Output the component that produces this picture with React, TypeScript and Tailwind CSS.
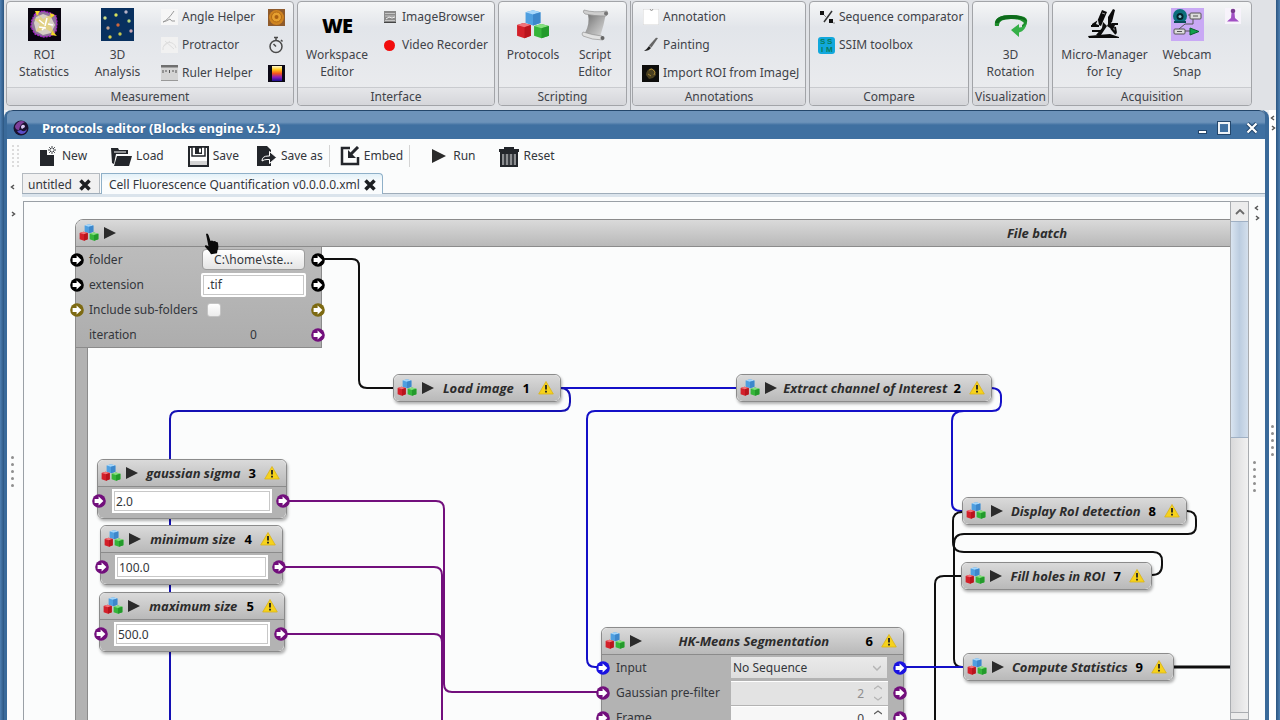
import { useId } from 'react'
import type { ReactNode } from 'react'
import clsx from 'clsx'

type Tone = 'black' | 'blue' | 'olive' | 'purple'

const PORT_COLORS: Record<Tone, string> = {
  black: '#000000',
  blue: '#1a12e0',
  olive: '#7d6a12',
  purple: '#720f7c',
}

// Wires between blocks, in canvas coordinates
const WIRES = [
  { color: '#0f0f0f', width: 2, d: 'M300 57H328q7 0 7 7V178q0 8 8 8H370' },
  { color: '#1410c8', width: 2, d: 'M536 186H713' },
  { color: '#1410b4', width: 2, d: 'M536 186q10 0 10 10v4q0 9-9 9H154q-8 0-8 8V520' },
  { color: '#1410c8', width: 2, d: 'M967 186q10 0 10 9v5q0 9-9 9H571q-8 0-8 8V457q0 8 8 8h9' },
  { color: '#1410c8', width: 2, d: 'M940 209q-12 0-12 10V301q0 8 9 8h3' },
  { color: '#720f7c', width: 2, d: 'M262 299H412q8 0 8 8V482q0 8 8 8H578' },
  { color: '#720f7c', width: 2, d: 'M258 365H410q8 0 8 8V520' },
  { color: '#720f7c', width: 2, d: 'M260 432H410q8 0 8 8V520' },
  { color: '#0f0f0f', width: 2, d: 'M1163 309q9 0 9 9v6q0 8-8 8H940q-10 0-10 10V457q0 8 8 8h4' },
  { color: '#0f0f0f', width: 2, d: 'M1128 373q10 0 10-10v-4q0-9-9-9H940q-11 0-11-10V319q0-9 9-9h3' },
  { color: '#0f0f0f', width: 2, d: 'M938 374h-18q-9 0-9 8V520' },
  { color: '#1410c8', width: 2, d: 'M876 465H940' },
  { color: '#0f0f0f', width: 3, d: 'M1149 465H1400' },
]

const SIMPLE_BLOCKS = [
  { x: 369, y: 172, w: 168, title: 'Load image', order: 1 },
  { x: 712, y: 172, w: 256, title: 'Extract channel of Interest', order: 2 },
  { x: 938, y: 295, w: 225, title: 'Display RoI detection', order: 8 },
  { x: 937, y: 360, w: 191, title: 'Fill holes in ROI', order: 7 },
  { x: 939, y: 451, w: 211, title: 'Compute Statistics', order: 9 },
]

const VALUE_BLOCKS = [
  { x: 73, y: 257, w: 190, title: 'gaussian sigma', order: 3, value: '2.0' },
  { x: 76, y: 323, w: 183, title: 'minimum size', order: 4, value: '100.0' },
  { x: 75, y: 390, w: 186, title: 'maximum size', order: 5, value: '500.0' },
]

/* ---------- icons ---------- */

function CubesIcon({ className }: { className?: string }) {
  return (
    <svg viewBox="0 0 32 32" className={clsx('shrink-0', className)} aria-hidden="true">
      <path d="M9 4l7-2 7 2v10l-7 2.500-7-2.500z" fill="#4f9fe0" />
      <path d="M9 4l7-2 7 2-7 2z" fill="#a5d6fb" />
      <path d="M16 6l7-2v10l-7 2.500z" fill="#3d87cb" />
      <path d="M1 16l6-2 7 2v10l-6 2.500-7-2.500z" fill="#d3202a" />
      <path d="M1 16l6-2 7 2-6 2z" fill="#f0747a" />
      <path d="M8 18l6-2v10l-6 2.500z" fill="#b9141d" />
      <path d="M17 17l7-2 7 2v9l-7 2.500-7-2.500z" fill="#35b53a" />
      <path d="M17 17l7-2 7 2-7 2z" fill="#86e07f" />
      <path d="M24 19l7-2v9l-7 2.500z" fill="#239a2b" />
    </svg>
  )
}

function WarnIcon() {
  return (
    <svg viewBox="0 0 16 16" className="size-4 shrink-0" aria-hidden="true">
      <path d="M8 1.500L15.300 14H.7z" fill="#f6d21c" stroke="#d9b21a" strokeWidth=".8" strokeLinejoin="round" />
      <path d="M8 5v4.500" stroke="#222" strokeWidth="1.800" />
      <path d="M8 10.800v1.700" stroke="#222" strokeWidth="1.800" />
    </svg>
  )
}

function PlayIcon({ className }: { className?: string }) {
  return (
    <svg viewBox="0 0 12 12" className={clsx('shrink-0', className)} aria-hidden="true">
      <path d="M0 0l12 6L0 12z" fill="#2b2b2b" />
    </svg>
  )
}

function RoiIcon() {
  return (
    <svg viewBox="0 0 33 33" className="size-[33px]" aria-hidden="true">
      <rect width="33" height="33" fill="#090510" />
      <path d="M7 6l8-3 7 2 6 3 1 7-1 8-5 5-8 1-8-3-4-7 1-7z" fill="#8d7399" stroke="#a823c9" strokeWidth="1.500" strokeDasharray="2 1" />
      <path d="M8 9l7-3 8 3 4 8-4 8-8 2-7-4-2-8z" fill="#d6cfc4" />
      <path d="M8 4l7 7 9-5-3 9 7 12-10-6-10 3 4-8-6-5 6-1z" fill="#e8d25a" opacity=".6" />
      <path d="M11 12l5 4m3-6l-2 8m-6 1l7 1m2-4l5 1M14 22l3-3" stroke="#fff" strokeWidth="1.500" />
      <path d="M7 3h5l-3 5zM22 5l5 2-4 3zM24 23l5 5-6-1z" fill="#f4dc28" />
    </svg>
  )
}

function AnalysisIcon() {
  const dots = [
    [4, 10, '#cfe08a'], [15, 7, '#d8e25c'], [25, 4, '#b9b4c8'], [28, 13, '#b7d57a'], [17, 17, '#d0673c'],
    [7, 20, '#c2a08f'], [30, 23, '#c9a6b2'], [19, 26, '#c6c952'], [9, 29, '#d8d04a'],
  ] as const
  return (
    <svg viewBox="0 0 33 33" className="size-[33px]" aria-hidden="true">
      <rect width="33" height="33" fill="#08305f" />
      {dots.map(([x, y, fill]) => (
        <circle key={`${x}-${y}`} cx={x} cy={y} r="1.700" fill={fill} />
      ))}
    </svg>
  )
}

function AngleIcon() {
  return (
    <svg viewBox="0 0 17 16" className="h-4 w-[17px]" aria-hidden="true">
      <rect width="17" height="16" fill="#f6f6f6" />
      <path d="M2 13q5-2 11-11M2 13q4-1 7-3 1 3 5 2" stroke="#9a9a9a" fill="none" />
    </svg>
  )
}

function ProtractorIcon() {
  return (
    <svg viewBox="0 0 17 16" className="h-4 w-[17px]" aria-hidden="true">
      <rect width="17" height="16" fill="#f1f1f1" />
      <path d="M2 13a6.500 6.500 0 0113-2M4 4l9 8M3 9l6-5" stroke="#dedede" fill="none" />
    </svg>
  )
}

function RulerIcon() {
  return (
    <svg viewBox="0 0 17 16" className="h-4 w-[17px]" aria-hidden="true">
      <rect y="1" width="17" height="15" fill="#d4d4d4" />
      <rect width="17" height="2.500" fill="#6f6f6f" />
      <path d="M2 5v3M5 5v2M8.500 5v3M12 5v2M15 5v3" stroke="#555" />
      <path d="M0 15.500h17" stroke="#999" />
    </svg>
  )
}

function OrangeIcon() {
  return (
    <svg viewBox="0 0 17 17" className="size-[17px]" aria-hidden="true">
      <rect width="17" height="17" fill="#8f5b2c" />
      <circle cx="8.500" cy="8.500" r="7.500" fill="#cf8420" />
      <circle cx="8.500" cy="8" r="5" fill="#e6a030" stroke="#b26a15" />
      <circle cx="8.500" cy="8" r="2" fill="#a96012" />
    </svg>
  )
}

function StopwatchIcon() {
  return (
    <svg viewBox="0 0 16 18" className="h-[18px] w-4" aria-hidden="true">
      <circle cx="8" cy="10.500" r="6" fill="none" stroke="#4a4a4a" strokeWidth="1.500" />
      <path d="M6 1.500h4M8 1.500V4M13 4l1.500 1.500M8 10.500L5.500 8" stroke="#4a4a4a" strokeWidth="1.500" />
    </svg>
  )
}

function LutIcon() {
  const id = useId()
  return (
    <svg viewBox="0 0 17 17" className="size-[17px]" aria-hidden="true">
      <defs>
        <linearGradient id={id} x1="0" y1="0" x2="0" y2="1">
          <stop offset="0" stopColor="#fffbd0" />
          <stop offset=".25" stopColor="#ffc414" />
          <stop offset=".5" stopColor="#f4531f" />
          <stop offset=".75" stopColor="#8a1cc0" />
          <stop offset="1" stopColor="#1a118c" />
        </linearGradient>
      </defs>
      <rect width="17" height="17" fill="#0b0815" />
      <rect x="4" y="1" width="10" height="15" fill={`url(#${id})`} />
    </svg>
  )
}

function BrowserIcon() {
  return (
    <svg viewBox="0 0 12 12" className="size-3" aria-hidden="true">
      <rect width="12" height="12" fill="#8a8a8a" />
      <path d="M1 2.500h10M1 5h10M1 9.500h10" stroke="#c4c4c4" />
      <path d="M2 8l3-2 3 1 3-1" stroke="#eee" fill="none" />
      <path d="M0 11.500h12" stroke="#444" />
    </svg>
  )
}

function ScrollIcon() {
  const id = useId()
  return (
    <svg viewBox="0 0 30 34" className="h-[34px] w-[30px]" aria-hidden="true">
      <defs>
        <linearGradient id={id} x1="0" y1="0" x2="1" y2="1">
          <stop offset="0" stopColor="#6c6c6c" />
          <stop offset=".5" stopColor="#a9a9a9" />
          <stop offset="1" stopColor="#dedede" />
        </linearGradient>
      </defs>
      <path d="M8 6l18-1q-2 12-6 24l-15-4q5-9 3-19z" fill={`url(#${id})`} />
      <path d="M4 2q10 3 23 1 2 3-1 5Q14 8 5 6 2 4 4 2z" fill="#cfcfcf" stroke="#8a8a8a" strokeWidth=".6" />
      <path d="M3 24q9 3 19 4 3 2 1 4-11 0-20-4-2-2 0-4z" fill="#e2e2e2" stroke="#8a8a8a" strokeWidth=".6" />
      <circle cx="26" cy="5.500" r="2" fill="#777" />
      <circle cx="22.500" cy="30" r="2" fill="#666" />
    </svg>
  )
}

function NoteIcon() {
  return (
    <svg viewBox="0 0 16 16" className="size-4" aria-hidden="true">
      <rect width="16" height="16" fill="#fff" stroke="#d5d5d5" />
      <path d="M7 0l1.500 2L10 0" stroke="#999" fill="none" />
    </svg>
  )
}

function BrushIcon() {
  return (
    <svg viewBox="0 0 16 16" className="size-4" aria-hidden="true">
      <path d="M15 1L8.500 10.500 6 8.500 13 .7z" fill="#666" />
      <path d="M6 9l2 2Q6 14 1 14q3-2 5-5z" fill="#222" />
    </svg>
  )
}

function ImportRoiIcon() {
  return (
    <svg viewBox="0 0 17 17" className="size-[17px]" aria-hidden="true">
      <rect width="17" height="17" fill="#0e0e0c" />
      <path d="M4 10q0-5 5-7l4 2 1 5-3 3-4 1z" fill="#4a4020" />
      <path d="M7 5l3-1 3 3-1 3M6 9l3 2" stroke="#a58432" fill="none" />
    </svg>
  )
}

function CompareIcon() {
  return (
    <svg viewBox="0 0 16 14" className="h-3.5 w-4" aria-hidden="true">
      <path d="M1 1h4v4H1zM10 9h4v4h-4z" fill="#111" />
      <path d="M13 1L5 12" stroke="#333" strokeWidth="1.500" />
      <path d="M5 5l2 2M14 13h2" stroke="#888" />
    </svg>
  )
}

function SsimIcon() {
  return (
    <svg viewBox="0 0 17 17" className="size-[17px]" aria-hidden="true">
      <rect width="17" height="17" rx="3" fill="#12a8dc" />
      <g fill="#087d5d" fontFamily="Liberation Sans, sans-serif" fontSize="8" fontWeight="700">
        <text x="2" y="7">S</text>
        <text x="9" y="7">S</text>
        <text x="3" y="15">I</text>
        <text x="8" y="15">M</text>
      </g>
    </svg>
  )
}

function RotationIcon() {
  return (
    <svg viewBox="0 0 34 34" className="size-[34px]" aria-hidden="true">
      <path d="M1 18Q-1 7 17 7t16 7q0 5-5 7v-4q3-2 1-3-3-3-12-3-13 0-12 7z" fill="#1d8f2b" />
      <path d="M1 15q1-8 16-8 13 0 16 6-6-3-16-2Q5 11 5 15z" fill="#0d6a1b" />
      <path d="M17 22l8-6v3.500q5 0 7-4 0 7-7 9V29z" fill="#35b048" />
    </svg>
  )
}

function MicroscopeIcon() {
  return (
    <svg viewBox="0 0 33 33" className="size-[33px]" aria-hidden="true">
      <path d="M14 2l5 2-6 14-5-2zM10 12l-6 4v3l7-2zM20 9l5-8 2 1-3 12-4 3zM21 14l6 3-2 5-6-4zM15 14l4 4-6 9H8l6-7z" fill="#0b0b0b" />
      <path d="M3 17h8v2H3zM24 15h6v2h-6zM4 22h9v2H4zM0 28l10-1 12-1 9 3v1L1 30z" fill="#0b0b0b" />
      <path d="M23 20l5 6M27 19l1 6" stroke="#0b0b0b" strokeWidth="2" />
      <path d="M14 5l3 1" stroke="#999" />
    </svg>
  )
}

function WebcamIcon() {
  return (
    <svg viewBox="0 0 33 33" className="size-[33px]" aria-hidden="true">
      <rect width="33" height="33" fill="#c9a9f5" />
      <circle cx="9" cy="8" r="7" fill="#0c6f7c" />
      <circle cx="9" cy="8.500" r="3.500" fill="#07252c" />
      <circle cx="9" cy="8.500" r="1.500" fill="#7fc4cf" />
      <path d="M3 14h12" stroke="#0a4c57" strokeWidth="2" />
      <path d="M17 7h3M22 11v5H14l-6 5M14 23h5" stroke="#555" fill="none" />
      <rect x="19" y="5" width="11" height="6" rx="1" fill="#ddd" stroke="#555" />
      <rect x="3" y="21" width="11" height="5" rx="1" fill="#ddd" stroke="#555" />
      <path d="M22 8h5M6 23.500h5" stroke="#555" />
      <path d="M19 20l9 3.500-9 3.500z" fill="#12a04c" stroke="#0a5f2c" />
    </svg>
  )
}

function PawnIcon() {
  return (
    <svg viewBox="0 0 16 16" className="size-4" aria-hidden="true">
      <rect width="16" height="16" fill="#f7f3fb" />
      <circle cx="8" cy="3" r="2.300" fill="#7a3a90" />
      <path d="M6.500 5h3l.5 5 4 3.500H2L6 10z" fill="#a14fc4" />
    </svg>
  )
}

function AppIcon() {
  return (
    <svg viewBox="0 0 16 16" className="size-4 shrink-0" aria-hidden="true">
      <circle cx="8" cy="8" r="7.500" fill="#1b1230" />
      <path d="M2 6q4-7 10-4-5 2-6 8-4 0-4-4z" fill="#7e3f9a" />
      <path d="M8 10q3 3 6-1-1 5-6 5-3-1-4-3z" fill="#5c4ec9" />
      <path d="M9 5q3-1 3 2l-3 2q-2-2 0-4z" fill="#d9c9f2" />
    </svg>
  )
}

function NewIcon() {
  return (
    <svg viewBox="0 0 17 20" className="h-5 w-[17px]" aria-hidden="true">
      <path d="M1 4h7v5h7v11H1z" fill="#23262b" />
      <path d="M13 0v8M9 4h8M10.200 1.200l5.600 5.600M15.800 1.200l-5.600 5.600" stroke="#3b3e43" />
      <circle cx="13" cy="4" r="1.300" fill="#fff" />
    </svg>
  )
}

function LoadIcon() {
  return (
    <svg viewBox="0 0 21 19" className="h-[19px] w-[21px]" aria-hidden="true">
      <path d="M0 1h7l1 2h9v4H5L3 17l-2-1z" fill="#23262b" />
      <path d="M6 9h15l-3 10H3z" fill="#23262b" />
      <path d="M3 5h12" stroke="#fff" />
    </svg>
  )
}

function SaveIcon() {
  return (
    <svg viewBox="0 0 21 21" className="size-[21px]" aria-hidden="true">
      <path d="M1 1h19v19H1z" fill="#fff" stroke="#23262b" strokeWidth="2" />
      <path d="M4 1h13v9H4z" fill="#fff" stroke="#23262b" strokeWidth="1.500" />
      <path d="M7 1h7v7H7z" fill="#23262b" />
      <path d="M11 2.500h2v4h-2z" fill="#fff" />
      <path d="M2 15h17v4H2z" fill="#d4d4d4" />
    </svg>
  )
}

function SaveAsIcon() {
  return (
    <svg viewBox="0 0 20 20" className="size-5" aria-hidden="true">
      <path d="M0 0h10l4 4v16H0z" fill="#23262b" />
      <path d="M5 15q0-5 6-5h1.500V5.500l7 6-7 6V13.500H10q-3 0-5 1.500z" fill="#23262b" stroke="#fff" />
    </svg>
  )
}

function EmbedIcon() {
  return (
    <svg viewBox="0 0 20 20" className="size-5" aria-hidden="true">
      <path d="M10 2H2v16h16v-7" fill="none" stroke="#23262b" strokeWidth="2.500" />
      <path d="M18 1l-7 7" stroke="#23262b" strokeWidth="3" />
      <path d="M8 4v8h8z" fill="#23262b" />
    </svg>
  )
}

function TrashIcon() {
  return (
    <svg viewBox="0 0 20 21" className="h-[21px] w-5" aria-hidden="true">
      <path d="M0 3h5V1h10v2h5v3H0z" fill="#23262b" />
      <path d="M2 7h16v13H2z" fill="#8b8d90" stroke="#23262b" strokeWidth="2" />
      <path d="M6 8v11M10 8v11M14 8v11" stroke="#23262b" strokeWidth="1.500" />
    </svg>
  )
}

function CloseIcon() {
  return (
    <svg viewBox="0 0 12 12" className="size-3" aria-hidden="true">
      <path d="M1.500 1.500l9 9M10.500 1.500l-9 9" stroke="#1d1f22" strokeWidth="3.500" />
    </svg>
  )
}

/* ---------- ribbon ---------- */

function RibbonGroup({ label, className, children }: { label: string; className: string; children: ReactNode }) {
  return (
    <section
      aria-label={label}
      className={clsx(
        'flex h-[105px] shrink-0 flex-col rounded border border-[#a2a4a8] bg-linear-to-b from-[#f5f6f7] via-[#e2e5ea] via-25% to-[#ecedef]',
        className,
      )}
    >
      <div className="flex flex-1">{children}</div>
      <div className="h-[18px] rounded-b border-t border-[#c9cbcf] bg-linear-to-b from-[#e5e6e9] to-[#d5d6da] text-center leading-[18px]">
        {label}
      </div>
    </section>
  )
}

function BigTool({ icon, lines, className }: { icon: ReactNode; lines: string[]; className: string }) {
  return (
    <button type="button" className={clsx('flex shrink-0 flex-col items-center pt-[6px]', className)}>
      <span className="flex h-[38px] items-start justify-center">{icon}</span>
      {lines.map((line) => (
        <span key={line} className="h-[17px] leading-[17px] whitespace-nowrap">
          {line}
        </span>
      ))}
    </button>
  )
}

function SmallTool({ icon, label }: { icon: ReactNode; label: string }) {
  return (
    <button type="button" className="flex h-7 items-center gap-1 whitespace-nowrap">
      <span className="flex w-[17px] justify-center">{icon}</span>
      {label}
    </button>
  )
}

function Ribbon() {
  return (
    <header className="flex h-[110px] shrink-0 gap-[3px] overflow-hidden bg-[#e0e2e6] pt-px pl-[2px] text-[#3f4349]">
      <RibbonGroup label="Measurement" className="w-[288px]">
        <BigTool icon={<RoiIcon />} lines={['ROI', 'Statistics']} className="w-[74px]" />
        <BigTool icon={<AnalysisIcon />} lines={['3D', 'Analysis']} className="w-[73px]" />
        <div className="ml-[7px] flex w-[107px] flex-col pt-px">
          <SmallTool icon={<AngleIcon />} label="Angle Helper" />
          <SmallTool icon={<ProtractorIcon />} label="Protractor" />
          <SmallTool icon={<RulerIcon />} label="Ruler Helper" />
        </div>
        <div className="flex flex-col pt-px">
          <button type="button" aria-label="Intensity profile" className="flex h-7 items-center"><OrangeIcon /></button>
          <button type="button" aria-label="Chronometer" className="flex h-7 items-center"><StopwatchIcon /></button>
          <button type="button" aria-label="Colormap" className="flex h-7 items-center"><LutIcon /></button>
        </div>
      </RibbonGroup>
      <RibbonGroup label="Interface" className="w-[198px]">
        <BigTool
          icon={<span className="pt-[6px] text-[20px] leading-6 font-black tracking-tighter text-black">WE</span>}
          lines={['Workspace', 'Editor']}
          className="w-[78px]"
        />
        <div className="ml-[5px] flex flex-col pt-px">
          <SmallTool icon={<BrowserIcon />} label="ImageBrowser" />
          <SmallTool icon={<span className="size-[11px] rounded-full bg-[#f20d0d]" />} label="Video Recorder" />
        </div>
      </RibbonGroup>
      <RibbonGroup label="Scripting" className="w-[129px]">
        <BigTool icon={<CubesIcon className="size-[34px]" />} lines={['Protocols']} className="w-[68px]" />
        <BigTool icon={<ScrollIcon />} lines={['Script', 'Editor']} className="w-[56px]" />
      </RibbonGroup>
      <div className="mr-[-2px] w-px shrink-0 bg-[#a2a4a8]" />
      <RibbonGroup label="Annotations" className="w-[174px]">
        <div className="ml-[9px] flex flex-col pt-px">
          <SmallTool icon={<NoteIcon />} label="Annotation" />
          <SmallTool icon={<BrushIcon />} label="Painting" />
          <SmallTool icon={<ImportRoiIcon />} label="Import ROI from ImageJ" />
        </div>
      </RibbonGroup>
      <RibbonGroup label="Compare" className="w-[160px]">
        <div className="ml-[8px] flex flex-col pt-px">
          <SmallTool icon={<CompareIcon />} label="Sequence comparator" />
          <SmallTool icon={<SsimIcon />} label="SSIM toolbox" />
        </div>
      </RibbonGroup>
      <RibbonGroup label="Visualization" className="w-[77px]">
        <BigTool icon={<RotationIcon />} lines={['3D', 'Rotation']} className="w-[75px]" />
      </RibbonGroup>
      <RibbonGroup label="Acquisition" className="w-[200px]">
        <BigTool icon={<MicroscopeIcon />} lines={['Micro-Manager', 'for Icy']} className="w-[103px]" />
        <BigTool icon={<WebcamIcon />} lines={['Webcam', 'Snap']} className="w-[62px]" />
        <button type="button" aria-label="Live view" className="ml-[7px] flex h-7 items-center"><PawnIcon /></button>
      </RibbonGroup>
    </header>
  )
}

/* ---------- editor blocks ---------- */

function Port({ tone, side }: { tone: Tone; side: 'left' | 'right' }) {
  return (
    <svg
      viewBox="0 0 14 14"
      className={clsx('absolute top-1/2 size-3.5 -translate-y-1/2', side === 'left' ? '-left-1.5' : '-right-1')}
      aria-hidden="true"
    >
      <circle cx="7" cy="7" r="6.800" fill={PORT_COLORS[tone]} />
      <path d="M2.600 5h4V2.600L11.400 7l-4.800 4.400V9h-4z" fill="#fff" />
    </svg>
  )
}

function BlockHeader({ title, order }: { title: string; order?: number }) {
  return (
    <div className="flex h-[26px] items-center bg-linear-to-b from-[#dadada] to-[#b9b9b9] pr-[6px] pl-[3px] text-[13px] text-[#2c2c2c]">
      <CubesIcon className="size-5" />
      <PlayIcon className="ml-[5px] size-3" />
      <h2 className="flex-1 text-center font-['Open_Sans','Noto_Sans',sans-serif] font-bold whitespace-nowrap italic">
        {title}
      </h2>
      {order !== undefined && (
        <>
          <span className="mr-2 font-bold text-black">{order}</span>
          <WarnIcon />
        </>
      )}
    </div>
  )
}

const BLOCK = 'absolute rounded-md border border-[#8b8b8b] shadow-[1px_2px_3px_rgba(0,0,0,0.3)]'

function Row({ left, right, label, children }: { left?: Tone; right?: Tone; label: ReactNode; children: ReactNode }) {
  return (
    <div className="relative flex h-[25px] items-center">
      {left && <Port tone={left} side="left" />}
      {label}
      {children}
      {right && <Port tone={right} side="right" />}
    </div>
  )
}

function FileBatchBlock() {
  return (
    <div className="absolute top-[17px] left-[51px] h-[700px] w-[1890px]">
      <div className="overflow-hidden rounded-t-lg border border-[#8b8b8b]">
        <BlockHeader title="File batch" />
      </div>
      <div className="-mt-px w-[247px] border border-[#8b8b8b] bg-linear-to-b from-[#bcbcbc] to-[#adadad]">
        <Row left="black" right="black" label={<span className="w-[112px] shrink-0 pl-[13px]">folder</span>}>
          <button type="button" className="ml-[14px] h-[21px] w-[103px] rounded-sm border border-[#9c9c9c] bg-linear-to-b from-white to-[#e4e4e4] leading-[18px]">
            C:\home\ste...
          </button>
        </Row>
        <Row left="black" right="black" label={<label htmlFor="extension" className="w-[112px] shrink-0 pl-[13px]">extension</label>}>
          <input
            id="extension"
            defaultValue=".tif"
            className="ml-[13px] h-6 w-[105px] rounded-xs border-2 border-white bg-white pl-[4px] inset-ring inset-ring-[#c8c8c8]"
          />
        </Row>
        <Row left="olive" right="olive" label={<label htmlFor="subfolders" className="w-[112px] shrink-0 pl-[13px] whitespace-nowrap">Include sub-folders</label>}>
          <input
            id="subfolders"
            type="checkbox"
            className="ml-[19px] size-3.5 appearance-none rounded-[3px] border border-[#c4c4c4] bg-linear-to-b from-white to-[#ececec]"
          />
        </Row>
        <Row right="purple" label={<span className="w-[112px] shrink-0 pl-[13px]">iteration</span>}>
          <output className="ml-[13px] w-[105px] text-center">0</output>
        </Row>
      </div>
      <div className="h-full w-[13px] border-x border-[#8b8b8b] bg-[#b2b2b2]" />
    </div>
  )
}

function Spinner({ id, label, value, disabled }: { id: string; label: string; value: string; disabled?: boolean }) {
  return (
    <Row left="purple" right="purple" label={<label htmlFor={id} className="w-[129px] shrink-0 pl-[14px] whitespace-nowrap">{label}</label>}>
      <div className="relative">
        <input
          id={id}
          defaultValue={value}
          disabled={disabled}
          className={clsx(
            'h-[24px] w-[157px] border-t border-white pr-6 text-right',
            disabled ? 'bg-[#e3e3e3] text-[#8f8f8f]' : 'bg-[#f7f7f7] text-[#3f4349]',
          )}
        />
        <svg viewBox="0 0 8 16" className="absolute top-1 right-1.5 h-4 w-2" aria-hidden="true">
          <path d="M0 4l4-3 4 3M0 12l4 3 4-3" stroke={disabled ? '#b5b5b5' : '#5c5c5c'} strokeWidth="1.300" fill="none" />
        </svg>
      </div>
    </Row>
  )
}

function SegmentationBlock() {
  return (
    <div className={BLOCK} style={{ left: 577, top: 425, width: 303 }}>
      <div className="overflow-hidden rounded-t-md border-b border-[#8b8b8b]">
        <BlockHeader title="HK-Means Segmentation" order={6} />
      </div>
      <div className="bg-[#b3b3b3]">
        <Row left="blue" right="blue" label={<label htmlFor="input" className="w-[129px] shrink-0 pl-[14px]">Input</label>}>
          <div className="relative">
            <select id="input" className="h-[21px] w-[156px] appearance-none bg-linear-to-b from-[#eaeaea] to-[#dedede] pl-[2px]">
              <option>No Sequence</option>
            </select>
            <svg viewBox="0 0 8 6" className="absolute top-2 right-1.5 h-1.5 w-2" aria-hidden="true">
              <path d="M0 1l4 4 4-4" stroke="#b5b5b5" strokeWidth="1.500" fill="none" />
            </svg>
          </div>
        </Row>
        <Spinner id="prefilter" label="Gaussian pre-filter" value="2" disabled />
        <Spinner id="frame" label="Frame" value="0" />
      </div>
    </div>
  )
}

function Canvas() {
  return (
    <main className="relative min-w-0 flex-1 overflow-hidden border-t border-l border-[#9aa0a6] bg-[#fbfcfc]">
      <FileBatchBlock />
      <svg className="absolute top-0 left-0 size-full" aria-hidden="true">
        {WIRES.map((wire) => (
          <path key={wire.d} d={wire.d} stroke={wire.color} strokeWidth={wire.width} fill="none" />
        ))}
      </svg>
      {SIMPLE_BLOCKS.map((block) => (
        <div key={block.order} className={BLOCK} style={{ left: block.x, top: block.y, width: block.w }}>
          <div className="overflow-hidden rounded-md">
            <BlockHeader title={block.title} order={block.order} />
          </div>
        </div>
      ))}
      {VALUE_BLOCKS.map((block) => (
        <div key={block.order} className={BLOCK} style={{ left: block.x, top: block.y, width: block.w }}>
          <div className="overflow-hidden rounded-t-md border-b border-[#8b8b8b]">
            <BlockHeader title={block.title} order={block.order} />
          </div>
          <div className="rounded-b-md bg-[#b3b3b3] pb-[3px]">
            <div className="relative flex h-7 items-center px-3.5">
              <Port tone="purple" side="left" />
              <input
                aria-label={block.title}
                defaultValue={block.value}
                className="h-6 w-full border-2 border-white bg-white pl-[2px] inset-ring inset-ring-[#c8c8c8]"
              />
              <Port tone="purple" side="right" />
            </div>
          </div>
        </div>
      ))}
      <SegmentationBlock />
      {/* hand cursor over the batch header */}
      <svg viewBox="0 0 16 22" className="absolute top-[31px] left-[180px] h-[22px] w-4" aria-hidden="true">
        <path
          d="M2 1q1.500-1.500 2.500 1l2 6 1.500-.5 1.500.7 1.500-.3 1.200 1 1.500.3q1.500 5-.2 8l-.5 3-6 1-1.500-2.500-4.500-5q-.5-2 2-1.200l1.500 1z"
          fill="#0a0a0a"
        />
      </svg>
    </main>
  )
}

/* ---------- window chrome ---------- */

function Arrows({ left = true, right = true }: { left?: boolean; right?: boolean }) {
  return (
    <svg viewBox="0 0 6 16" className="h-4 w-1.5" aria-hidden="true">
      {left && <path d="M4 1L1.500 3 4 5" stroke="#555" strokeWidth="1.500" fill="none" />}
      {right && <path d="M2 11l2.500 2L2 15" stroke="#555" strokeWidth="1.500" fill="none" />}
    </svg>
  )
}

function Grip() {
  return (
    <div className="flex flex-col gap-1">
      {[0, 1, 2, 3, 4].map((dot) => (
        <span key={dot} className="block size-[3px] rounded-full bg-[#8f8f8f]" />
      ))}
    </div>
  )
}

function ToolbarButton({ icon, label, className }: { icon: ReactNode; label: string; className: string }) {
  return (
    <button type="button" className={clsx('flex shrink-0 items-center whitespace-nowrap', className)}>
      {icon}
      {label}
    </button>
  )
}

function TitleBar() {
  return (
    <div className="flex h-[29px] shrink-0 items-center rounded-t-md border-t border-[#23466b] bg-linear-to-b from-[#6d93ba] from-40% to-[#3f70a1] to-50% pt-[5px] pr-[7px] pl-[6px] text-white">
      <AppIcon />
      <h1 className="ml-[13px] flex-1 text-[13px] font-bold text-shadow-2xs">Protocols editor (Blocks engine v.5.2)</h1>
      <button type="button" aria-label="Minimize" className="flex h-3 w-[10px] items-end">
        <span className="h-[4px] w-[9px] border border-[#23466b] bg-white" />
      </button>
      <button type="button" aria-label="Maximize" className="ml-[10px] size-3 border-2 border-white/90 outline outline-[#23466b]" />
      <button type="button" aria-label="Close" className="ml-4">
        <svg viewBox="0 0 12 12" className="size-3" aria-hidden="true">
          <path d="M1.500 1.500l9 9M10.500 1.500l-9 9" stroke="#23466b" strokeWidth="4" />
          <path d="M1.500 1.500l9 9M10.500 1.500l-9 9" stroke="#fff" strokeWidth="2.200" />
        </svg>
      </button>
    </div>
  )
}

function Toolbar() {
  return (
    <div className="flex h-[34px] shrink-0 items-center pl-[5px]" role="toolbar" aria-label="Protocol actions">
      <div className="h-[22px] w-[7px] border-x-2 border-dotted border-[#dcdcdc]" />
      <ToolbarButton icon={<NewIcon />} label="New" className="ml-[20px] gap-[6px]" />
      <ToolbarButton icon={<LoadIcon />} label="Load" className="ml-[24px] gap-[4px]" />
      <ToolbarButton icon={<SaveIcon />} label="Save" className="ml-[24px] gap-[4px]" />
      <ToolbarButton icon={<SaveAsIcon />} label="Save as" className="ml-[18px] gap-[4px]" />
      <div className="ml-[6px] h-[22px] w-px bg-[#d4d4d4]" />
      <ToolbarButton icon={<EmbedIcon />} label="Embed" className="ml-[10px] gap-[4px]" />
      <div className="ml-[6px] h-[22px] w-px bg-[#d4d4d4]" />
      <ToolbarButton icon={<PlayIcon className="size-[14px]" />} label="Run" className="ml-[22px] gap-[7px]" />
      <ToolbarButton icon={<TrashIcon />} label="Reset" className="ml-[24px] gap-[4px]" />
    </div>
  )
}

function Tabs() {
  return (
    <div role="tablist" className="flex h-[21px] shrink-0 border-b border-[#9fadba]">
      <div className="flex w-[78px] items-center border border-b-0 border-[#b4bac0] bg-[#f1f1f1] pt-[2px] pl-[5px]">
        <button type="button" role="tab" aria-selected="false">untitled</button>
        <button type="button" aria-label="Close untitled" className="ml-[7px]"><CloseIcon /></button>
      </div>
      <div className="-mb-px ml-px flex w-[282px] items-center rounded-tr-sm border border-b-0 border-[#8fb0c8] bg-linear-to-b from-[#e3f1f8] to-[#fafcfd] to-40% pt-px pl-[7px]">
        <button type="button" role="tab" aria-selected="true" className="whitespace-nowrap">
          Cell Fluorescence Quantification v0.0.0.0.xml
        </button>
        <button type="button" aria-label="Close protocol" className="ml-[4px]"><CloseIcon /></button>
      </div>
    </div>
  )
}

function ScrollBar() {
  return (
    <div className="flex w-[19px] shrink-0 flex-col border border-[#a9acb0] bg-linear-to-r from-[#d9d9da] to-[#f1f1f1]">
      <button type="button" aria-label="Scroll up" className="flex h-[19px] shrink-0 items-center justify-center bg-[#ececec]">
        <svg viewBox="0 0 10 6" className="h-1.5 w-2.5" aria-hidden="true">
          <path d="M1 5l4-4 4 4" stroke="#6a6a6a" strokeWidth="1.800" fill="none" />
        </svg>
      </button>
      <div className="h-[217px] shrink-0 border-y border-[#9fb0c4] bg-linear-to-r from-[#d9e4f0] via-[#bccde0] to-[#d3dfec]" />
      <div className="flex-1" />
      <button type="button" aria-label="Scroll down" className="h-[7px] shrink-0 border-t border-[#a9acb0] bg-[#ececec]" />
    </div>
  )
}

export default function App() {
  return (
    <div className="flex h-screen overflow-hidden bg-[#f4f5f6] font-['Noto_Sans','Open_Sans',sans-serif] text-[12px] leading-4 text-[#33363b]">
      <div className="w-1 shrink-0 bg-linear-to-r from-[#4f80b2] to-[#2b5580]" />
      <div className="flex min-w-0 flex-1 flex-col">
        <Ribbon />
        <div className="flex min-h-0 flex-1 bg-[#eff1f3]">
          <div className="flex min-w-0 flex-1 flex-col rounded-t-lg border-r-4 border-l-3 border-[#3a6a9a] bg-[#fbfcfc]">
            <TitleBar />
            <Toolbar />
            <div className="flex min-h-0 flex-1">
              <div className="flex w-[15px] shrink-0 flex-col items-center pr-1">
                <div className="mt-[11px]"><Arrows right={false} /></div>
                <div className="mt-px"><Arrows left={false} /></div>
                <div className="mt-[239px]"><Grip /></div>
              </div>
              <div className="flex min-w-0 flex-1 flex-col">
                <Tabs />
                <div className="h-[7px] shrink-0 border-b-4 border-[#fbfcfc] bg-[#dbe4ec]" />
                <div className="flex min-h-0 flex-1 pl-px">
                  <Canvas />
                  <ScrollBar />
                  <div className="flex w-4 shrink-0 flex-col items-center">
                    <div className="mt-1"><Arrows /></div>
                    <div className="mt-[240px] mr-[5px]"><Grip /></div>
                  </div>
                </div>
              </div>
            </div>
          </div>
          <div className="flex w-[7px] shrink-0 flex-col items-center bg-white">
            <div className="mt-[5px]"><Arrows /></div>
            <div className="mt-[294px]"><Grip /></div>
          </div>
        </div>
      </div>
      <div className="w-1 shrink-0 bg-linear-to-r from-[#2b5580] to-[#4f80b2]" />
    </div>
  )
}
